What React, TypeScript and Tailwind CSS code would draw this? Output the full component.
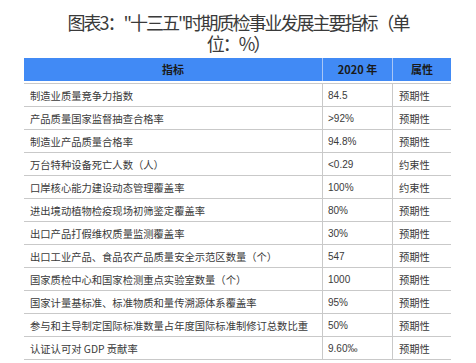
const rows: [string, string, string][] = [
  ["制造业质量竞争力指数", "84.5", "预期性"],
  ["产品质量国家监督抽查合格率", ">92%", "预期性"],
  ["制造业产品质量合格率", "94.8%", "预期性"],
  ["万台特种设备死亡人数（人）", "<0.29", "约束性"],
  ["口岸核心能力建设动态管理覆盖率", "100%", "约束性"],
  ["进出境动植物检疫现场初筛鉴定覆盖率", "80%", "预期性"],
  ["出口产品打假维权质量监测覆盖率", "30%", "预期性"],
  ["出口工业产品、食品农产品质量安全示范区数量（个）", "547", "预期性"],
  ["国家质检中心和国家检测重点实验室数量（个）", "1000", "预期性"],
  ["国家计量基标准、标准物质和量传溯源体系覆盖率", "95%", "预期性"],
  ["参与和主导制定国际标准数量占年度国际标准制修订总数比重", "50%", "预期性"],
  ["认证认可对 GDP 贡献率", "9.60‰", "预期性"],
];

const cjk = { fontFamily: '"Noto Sans CJK SC", "Liberation Sans", sans-serif' };
const num = { fontFamily: '"Liberation Sans", "Noto Sans CJK SC", sans-serif' };

export default function App() {
  return (
    <div className="h-[363px] w-[476px] overflow-hidden bg-white text-[#3a3a3a]">
      <div className="flex justify-center pt-[12px]">
        <h1
          className="w-[362px] text-center text-[18px] font-normal leading-[21px] tracking-[-2px] text-[#3a3a3a]"
          style={cjk}
        >
          图表3："十三五"时期质检事业发展主要指标（单位：%）
        </h1>
      </div>

      <div className="ml-[24px] mt-[4px] w-[427px]">
        <div className="flex h-[23px] bg-[#418af5] text-[11px] font-bold text-[#1a1a1a]" style={cjk}>
          <div className="flex w-[298px] items-center justify-center">指标</div>
          <div className="flex w-[70px] items-center justify-center border-l border-[#a9c6f5]">
            2020 年
          </div>
          <div className="flex flex-1 items-center justify-center border-l border-[#a9c6f5]">
            属性
          </div>
        </div>
        <div className="h-[2px]" />
        {rows.map(([name, value, kind]) => (
          <div key={name} className="flex h-[23px] border-t border-[#c9c9c9] text-[10.3px]">
            <div className="flex w-[298px] items-center whitespace-nowrap pl-[6px] pt-[1px]" style={cjk}>
              {name}
            </div>
            <div
              className="flex w-[70px] items-center border-l border-[#c9c9c9] pl-[5px] pt-[1px] text-[10px]"
              style={num}
            >
              {value}
            </div>
            <div
              className="flex flex-1 items-center border-l border-[#c9c9c9] pl-[6px] pt-[1px]"
              style={cjk}
            >
              {kind}
            </div>
          </div>
        ))}
        <div className="border-t border-[#c9c9c9]" />
      </div>
    </div>
  );
}
